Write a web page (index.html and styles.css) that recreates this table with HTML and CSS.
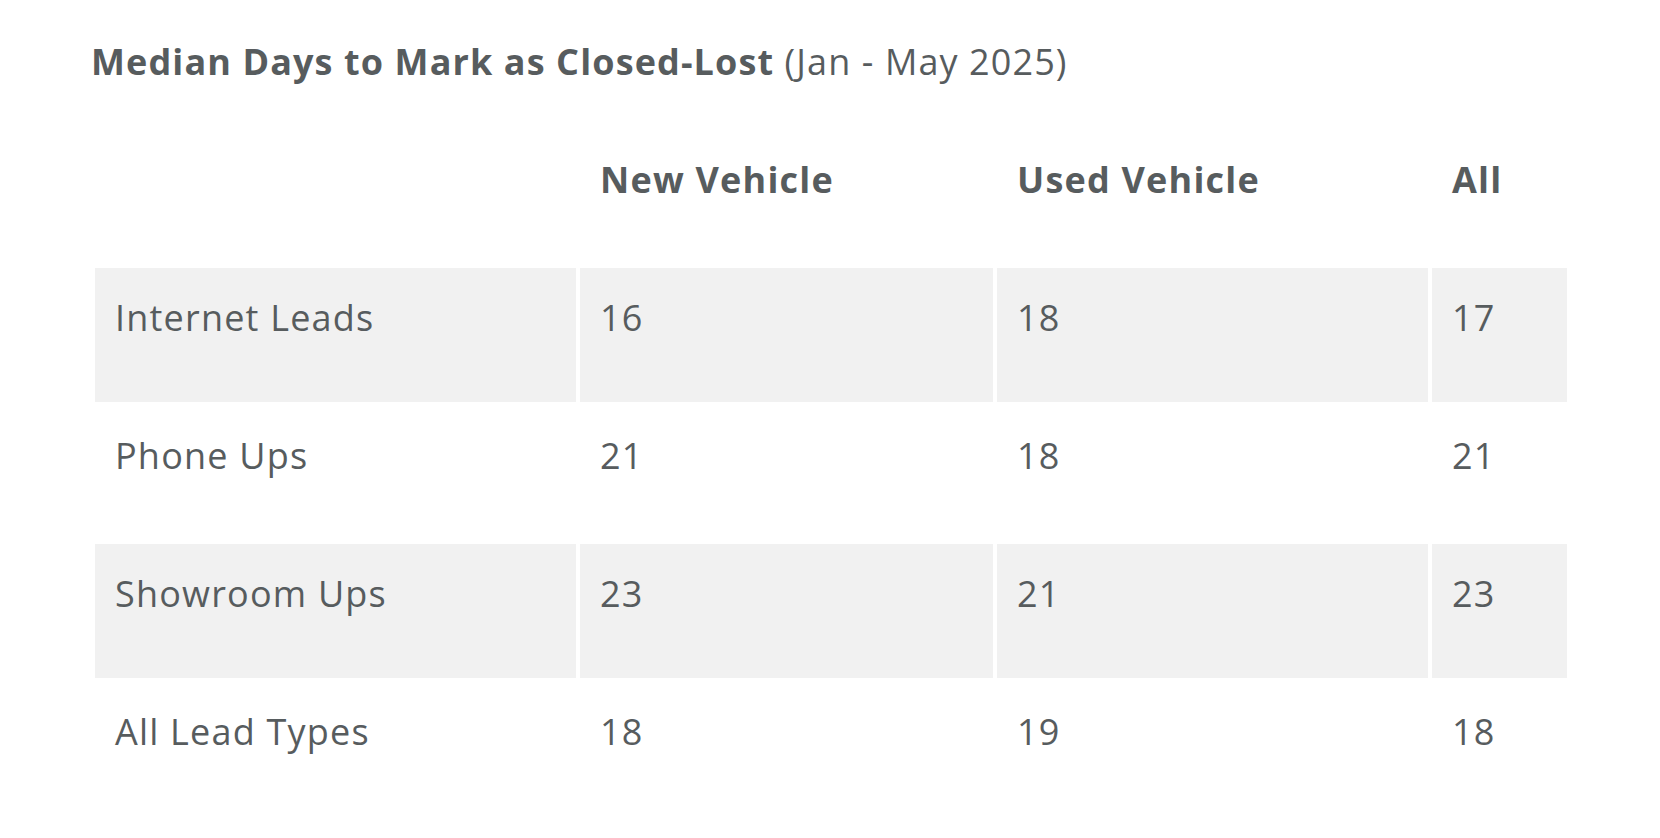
FILE: index.html
```html
<!DOCTYPE html>
<html lang="en">
<head>
<meta charset="utf-8">
<title>Median Days to Mark as Closed-Lost</title>
<link rel="stylesheet" href="styles.css">
</head>
<body>
<div class="page">
  <h2 class="title"><strong>Median Days to Mark as Closed-Lost</strong> <span class="period">(Jan - May 2025)</span></h2>
  <table class="stats">
    <thead>
      <tr>
        <th class="label"></th>
        <th>New Vehicle</th>
        <th>Used Vehicle</th>
        <th>All</th>
      </tr>
    </thead>
    <tbody>
      <tr class="shaded">
        <td class="label">Internet Leads</td>
        <td>16</td>
        <td>18</td>
        <td>17</td>
      </tr>
      <tr>
        <td class="label">Phone Ups</td>
        <td>21</td>
        <td>18</td>
        <td>21</td>
      </tr>
      <tr class="shaded">
        <td class="label">Showroom Ups</td>
        <td>23</td>
        <td>21</td>
        <td>23</td>
      </tr>
      <tr>
        <td class="label">All Lead Types</td>
        <td>18</td>
        <td>19</td>
        <td>18</td>
      </tr>
    </tbody>
  </table>
</div>
</body>
</html>
```

FILE: styles.css
```css
html, body {
  margin: 0;
  padding: 0;
  background: #ffffff;
}

body {
  font-family: "Open Sans", "Liberation Sans", sans-serif;
  color: #575c5e;
}

.page {
  padding: 0 89px 0 91px;
}

.title {
  margin: 0;
  padding-top: 37px;
  font-size: 36px;
  line-height: 50px;
  font-weight: 400;
  letter-spacing: 1.1px;
}

.title strong {
  font-weight: 700;
}

.stats {
  width: 100%;
  margin-top: 61px;
  border-collapse: separate;
  border-spacing: 4px;
  table-layout: fixed;
}

.stats th,
.stats td {
  text-align: left;
  vertical-align: top;
  font-size: 36px;
  line-height: 56px;
  letter-spacing: 1.2px;
  padding: 22px 20px 56px 20px;
}

.stats th {
  font-weight: 700;
  padding: 0 20px 56px 20px;
}

.stats th.label,
.stats td.label { width: 441px; }
.stats th:nth-child(2),
.stats td:nth-child(2) { width: 373px; }
.stats th:nth-child(3),
.stats td:nth-child(3) { width: 391px; }

.stats tr.shaded td {
  background: #f1f1f1;
}
```
